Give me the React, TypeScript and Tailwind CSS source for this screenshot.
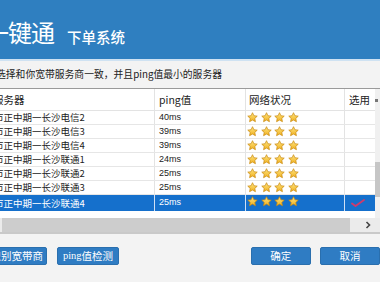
import React from "react";

const cjk = { fontFamily: '"Noto Sans CJK SC", "Noto Sans", sans-serif' };

function Star() {
  return (
    <svg width="11" height="11" viewBox="0 0 24 24" className="shrink-0">
      <defs>
        <linearGradient id="sg" x1="0" y1="0" x2="0" y2="1">
          <stop offset="0" stopColor="#ffe680" />
          <stop offset="1" stopColor="#f0b020" />
        </linearGradient>
      </defs>
      <path
        d="M12 1.5l3.1 6.6 7.2.9-5.3 5 1.4 7.1L12 17.6l-6.4 3.5 1.4-7.1-5.3-5 7.2-.9z"
        fill="url(#sg)"
        stroke="#c98a10"
        strokeWidth="1.6"
        strokeLinejoin="round"
      />
    </svg>
  );
}

const rows = [
  ["市正中期一长沙电信2", "40ms"],
  ["市正中期一长沙电信3", "39ms"],
  ["市正中期一长沙电信4", "39ms"],
  ["市正中期一长沙联通1", "24ms"],
  ["市正中期一长沙联通2", "25ms"],
  ["市正中期一长沙联通3", "25ms"],
  ["市正中期一长沙联通4", "25ms"],
];

export default function App() {
  return (
    <div className="w-[380px] h-[282px] overflow-hidden bg-[#f3f3f3] flex flex-col" style={cjk}>
      {/* header */}
      <div className="h-[59px] shrink-0 bg-[#2f7fc0] flex items-end pb-[15px] text-white whitespace-nowrap">
        <span className="-ml-[15px] text-[24px] leading-none tracking-[-1px]">一键通</span>
        <span className="ml-[13px] text-[14.5px] leading-none font-medium">下单系统</span>
      </div>
      <div className="h-[2px] shrink-0 bg-[#cfe2f2]" />
      {/* instruction */}
      <div className="h-[27px] shrink-0 flex items-center text-[9.8px] text-[#222] whitespace-nowrap">
        <span className="-ml-[4px]">选择和你宽带服务商一致，并且ping值最小的服务器</span>
      </div>
      {/* table */}
      <div className="shrink-0 border-t border-[#9a9a9a] bg-white flex">
        <div className="w-[375px] flex flex-col">
          <div className="h-[22px] flex text-[10.5px] text-[#222] border-b border-[#e3e3e3]">
            <div className="w-[155px] border-r border-[#e3e3e3] flex items-center overflow-hidden whitespace-nowrap">
              <span className="-ml-[7px]">服务器</span>
            </div>
            <div className="w-[91px] border-r border-[#e3e3e3] flex items-center pl-[4px]">ping值</div>
            <div className="w-[99px] border-r border-[#e3e3e3] flex items-center pl-[3px]">网络状况</div>
            <div className="w-[30px] flex items-center pl-[4px]">选用</div>
          </div>
          {rows.map(([name, ping], i) => {
            const sel = i === rows.length - 1;
            return (
              <div
                key={i}
                className={
                  sel
                    ? "h-[16px] flex bg-[#1570cc] text-white"
                    : "h-[14px] flex text-[#222] border-b border-[#e6e6e6]"
                }
              >
                <div
                  className={
                    "w-[155px] flex items-center overflow-hidden whitespace-nowrap text-[9.5px] border-r " +
                    (sel ? "border-[#cfe0f5]" : "border-[#e3e3e3]")
                  }
                >
                  <span className="-ml-[6px]">{name}</span>
                </div>
                <div
                  className={
                    "w-[91px] flex items-center pl-[4px] text-[9px] border-r " +
                    (sel ? "border-[#cfe0f5]" : "border-[#e3e3e3]")
                  }
                  style={{ fontFamily: '"Liberation Sans", sans-serif' }}
                >
                  {ping}
                </div>
                <div
                  className={
                    "w-[99px] flex items-start pt-[1px] pl-[1px] gap-[2.5px] border-r " +
                    (sel ? "border-[#cfe0f5] items-center pt-0" : "border-[#e3e3e3]")
                  }
                >
                  <Star />
                  <Star />
                  <Star />
                  <Star />
                </div>
                <div className="w-[30px] flex items-center pl-[6px]">
                  {sel && (
                    <svg width="14" height="8" viewBox="0 0 14 8">
                      <path d="M1 4.5 L4.5 7 L13 1" fill="none" stroke="#d23a6a" strokeWidth="1.8" strokeLinecap="round" strokeLinejoin="round" />
                    </svg>
                  )}
                </div>
              </div>
            );
          })}
          <div className="h-[7px]" />
        </div>
        {/* vertical scrollbar */}
        <div className="w-[5px] bg-[#f0f0f0] flex flex-col">
          <div className="h-[22px] flex items-center">
            <div className="w-[3px] h-[3px] bg-[#777]" />
          </div>
          <div className="h-[51px]" />
          <div className="h-[35px] bg-[#c6c6c6]" />
        </div>
      </div>
      {/* horizontal scrollbar */}
      <div className="h-[14px] shrink-0 bg-[#ebebeb] flex items-center">
        <div className="ml-[2px] w-[348px] h-[14px] bg-[#cdcdcd]" />
        <div className="flex-1 flex items-center justify-center pl-[6px] text-[#444]">
          <svg width="6" height="8" viewBox="0 0 6 8">
            <path d="M1.5 1 L4.5 4 L1.5 7" fill="none" stroke="#444" strokeWidth="1.6" />
          </svg>
        </div>
      </div>
      <div className="h-[2px] shrink-0 bg-[#c9c9c9]" />
      {/* buttons */}
      <div className="flex items-start pt-[13px] text-white text-[10.5px] whitespace-nowrap">
        <div className="-ml-[14px] w-[64px] h-[18px] rounded-[2px] bg-[#2f7cc3] border border-[#2a6fae] flex items-center justify-center">
          识别宽带商
        </div>
        <div className="ml-[10px] w-[64px] h-[18px] rounded-[2px] bg-[#2f7cc3] border border-[#2a6fae] flex items-center justify-center">
          <span style={{ fontFamily: '"Liberation Serif", serif' }}>ping</span>值检测
        </div>
        <div className="ml-[132px] w-[63px] h-[18px] rounded-[2px] bg-[#2f7cc3] border border-[#2a6fae] flex items-center justify-center">
          确定
        </div>
        <div className="ml-[9px] w-[60px] h-[18px] shrink-0 rounded-[2px] bg-[#2f7cc3] border border-[#2a6fae] flex items-center justify-center">
          取消
        </div>
      </div>
    </div>
  );
}
